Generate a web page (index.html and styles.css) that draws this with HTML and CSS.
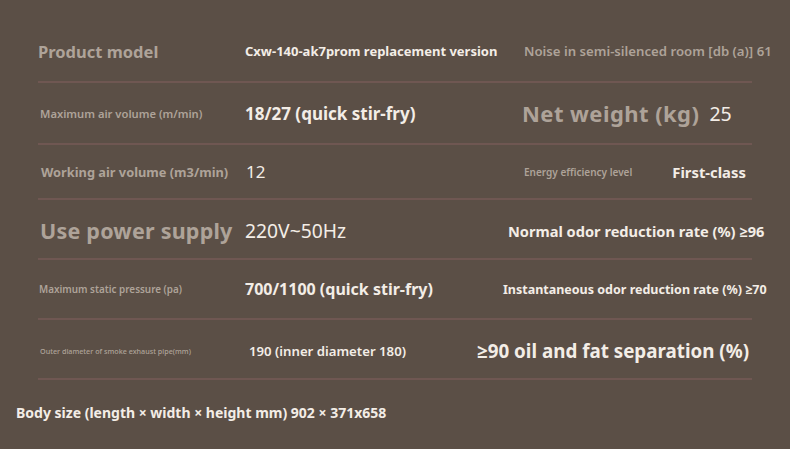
FILE: index.html
```html
<!DOCTYPE html>
<html>
<head>
<meta charset="utf-8">
<link rel="stylesheet" href="styles.css">
</head>
<body>
<div class="page">
  <div class="table">
    <div class="row r1">
      <div class="lab l-md">Product model</div>
      <div class="val v-sm">Cxw-140-ak7prom replacement version</div>
      <div class="side s1"><span class="lab l-noise">Noise in semi-silenced room [db (a)] 61</span></div>
    </div>
    <div class="row r2">
      <div class="lab l-xs">Maximum air volume (m/min)</div>
      <div class="val v-lg">18/27 (quick stir-fry)</div>
      <div class="side s1"><span class="lab l-xl">Net weight (kg)</span><span class="val v-reg">25</span></div>
    </div>
    <div class="row r3">
      <div class="lab l-sm">Working air volume (m3/min)</div>
      <div class="val v-reg">12</div>
      <div class="side s1"><span class="lab l-xxs">Energy efficiency level</span><span class="val v-fc">First-class</span></div>
    </div>
    <div class="row r4">
      <div class="lab l-xl">Use power supply</div>
      <div class="val v-reg">220V~50Hz</div>
      <div class="side s4"><span class="val v-md">Normal odor reduction rate (%) ≥96</span></div>
    </div>
    <div class="row r5">
      <div class="lab l-xxs2">Maximum static pressure (pa)</div>
      <div class="val v-lg2">700/1100 (quick stir-fry)</div>
      <div class="side s5"><span class="val v-inst">Instantaneous odor reduction rate (%) ≥70</span></div>
    </div>
    <div class="row r6">
      <div class="lab l-tiny">Outer diameter of smoke exhaust pipe(mm)</div>
      <div class="val v-pipe">190 (inner diameter 180)</div>
      <div class="side s6"><span class="val v-oil">≥90 oil and fat separation (%)</span></div>
    </div>
  </div>
  <div class="body-size">Body size (length × width × height mm) 902 × 371x658</div>
</div>
</body>
</html>
```
FILE: styles.css
```css
html, body {
  margin: 0;
  padding: 0;
}
body {
  width: 790px;
  height: 449px;
  overflow: hidden;
  background: #5b4f46;
  font-family: "Noto Sans", "Open Sans", sans-serif;
}
.page {
  padding-top: 21px;
}
.table {
  margin-left: 38px;
  width: 714px;
}
.row {
  display: grid;
  grid-template-columns: 207px 277px 230px;
  align-items: center;
  border-bottom: 2px solid #6f5752;
  white-space: nowrap;
}
.r1 { height: 60px; }
.r2 { height: 60px; }
.r3 { height: 53px; }
.r4 { height: 58px; }
.r5 { height: 58px; }
.r6 { height: 58px; }

.lab {
  color: #aea399;
  font-weight: 700;
}
.val {
  color: #f3ede6;
  font-weight: 700;
}
.side {
  display: flex;
  align-items: center;
}
.s1 { margin-left: 2px; }
.s4 { margin-left: -14px; }
.s5 { margin-left: -19px; }
.s6 { margin-left: -45px; }

.l-md { font-size: 16.5px; }
.l-xs { font-size: 11.2px; padding-left: 2px; font-weight: 600; }
.l-sm { font-size: 12.8px; padding-left: 3px; }
.l-xl { font-size: 21.5px; letter-spacing: 0.01em; }
.r2 .l-xl { font-size: 22px; letter-spacing: 0.02em; margin-left: -2px; }
.r4 .l-xl { padding-left: 2px; }
.l-xxs { font-size: 10px; font-weight: 600; }
.l-xxs2 { font-size: 9.9px; padding-left: 1px; font-weight: 600; }
.l-tiny { font-size: 7.2px; padding-left: 2px; font-weight: 500; }
.l-noise { font-size: 13.2px; font-weight: 600; }

.v-sm { font-size: 13px; }
.v-lg { font-size: 17px; }
.v-lg2 { font-size: 16px; }
.v-reg { font-size: 17px; font-weight: 400; padding-left: 1px; }
.r2 .v-reg { font-size: 19.5px; margin-left: 9px; }
.r4 .v-reg { font-size: 19.3px; margin-top: 3px; padding-left: 0; }
.r4 .lab { margin-top: 3px; }
.v-fc { font-size: 14.8px; margin-left: 40px; }
.v-md { font-size: 14.6px; margin-top: 3px; }
.v-inst { font-size: 12.5px; }
.v-pipe { font-size: 13.2px; font-weight: 600; padding-left: 4px; margin-top: 3px; }
.v-oil { font-size: 18.8px; margin-top: 3px; }
.r6 .lab { margin-top: 3px; }

.body-size {
  margin-left: 16px;
  margin-top: 23px;
  color: #f3ede6;
  font-weight: 700;
  font-size: 14px;
}
```
